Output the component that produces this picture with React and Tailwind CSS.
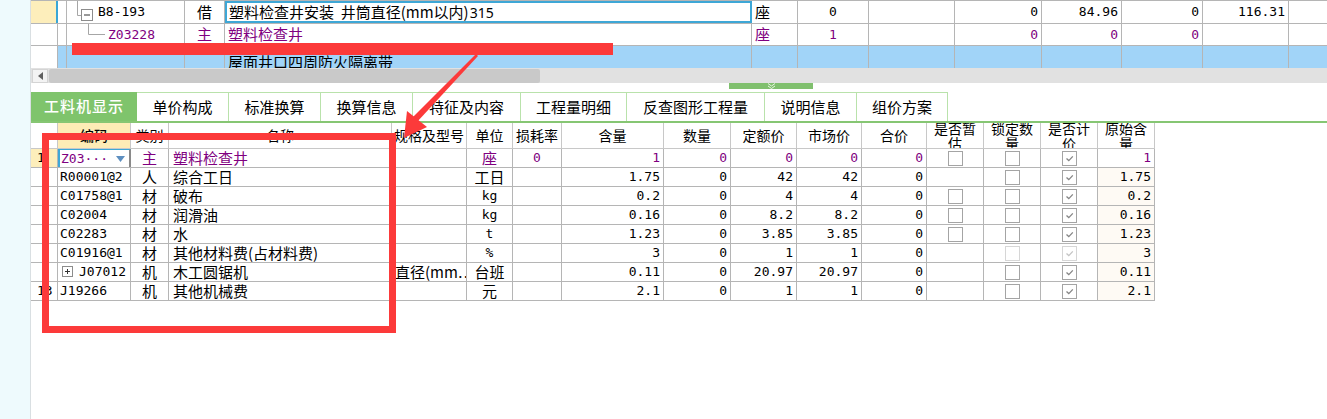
import React from "react";

const CJK = "font-['Noto_Sans_CJK_SC','Noto_Sans',sans-serif]";
const MONO = "font-['DejaVu_Sans_Mono','Noto_Sans_CJK_SC',monospace] text-[13px]";
const PURPLE = "text-[#800080]";
const LINE = "border-[#b5b5b5]";

const TopCell = ({ w, line = true, className = "", children }) => (
  <div
    className={`flex h-full shrink-0 items-center overflow-hidden whitespace-nowrap ${line ? `border-r ${LINE}` : ""} ${className}`}
    style={{ width: w }}
  >
    {children}
  </div>
);

const TreeBranch = ({ open }) =>
  open ? (
    <svg width="30" height="23" viewBox="0 0 30 23" className="shrink-0">
      <path d="M10.5 0 V14.5 H14" stroke="#a6a6a6" fill="none" />
      <rect x="14.5" y="8.5" width="11" height="11" fill="#fff" stroke="#8c8c8c" />
      <path d="M17 14 H23" stroke="#333" />
    </svg>
  ) : (
    <svg width="40" height="22" viewBox="0 0 40 22" className="shrink-0">
      <path d="M21.5 0 V10.5 H38" stroke="#a6a6a6" fill="none" />
    </svg>
  );

const BLUE_ROW = "bg-[#a1d4f8]";

function TopGrid() {
  return (
    <div className={`flex flex-col text-[15px] text-black ${CJK}`}>
      {/* row 1 */}
      <div className={`flex h-[24px] border-t border-b ${LINE}`}>
        <TopCell w={27} line={false} className="border-r-2 border-[#3aa6d6] bg-[#fdeebb]" />
        <TopCell w={9} />
        <TopCell w={118}>
          <TreeBranch open />
          <span className={`ml-[1px] ${MONO}`}>B8-193</span>
        </TopCell>
        <TopCell w={40} className="justify-center">借</TopCell>
        <TopCell w={527} line={false} className="border-2 border-[#3ea7d6] pl-[2px]">
          塑料检查井安装&nbsp;&nbsp;井筒直径(mm以内)
          <span className="ml-[1px] font-['Noto_Sans',sans-serif] text-[14px]">315</span>
        </TopCell>
        <TopCell w={46} className="pl-[3px]">座</TopCell>
        <TopCell w={71} className={`justify-center ${MONO}`}>0</TopCell>
        <TopCell w={86} />
        <TopCell w={87} className={`justify-end pr-[3px] ${MONO}`}>0</TopCell>
        <TopCell w={80} className={`justify-end pr-[3px] ${MONO}`}>84.96</TopCell>
        <TopCell w={81} className={`justify-end pr-[3px] ${MONO}`}>0</TopCell>
        <TopCell w={86} className={`justify-end pr-[3px] ${MONO}`}>116.31</TopCell>
        <div className="flex-1" />
      </div>
      {/* row 2 */}
      <div className={`flex h-[22px] border-b ${LINE} ${PURPLE}`}>
        <TopCell w={27} />
        <TopCell w={9} />
        <TopCell w={118}>
          <TreeBranch />
          <span className={`ml-[1px] ${MONO}`}>Z03228</span>
        </TopCell>
        <TopCell w={40} className="justify-center">主</TopCell>
        <TopCell w={527} className="pl-[3px]">塑料检查井</TopCell>
        <TopCell w={46} className="pl-[3px]">座</TopCell>
        <TopCell w={71} className={`justify-center ${MONO}`}>1</TopCell>
        <TopCell w={86} />
        <TopCell w={87} className={`justify-end pr-[3px] ${MONO}`}>0</TopCell>
        <TopCell w={80} className={`justify-end pr-[3px] ${MONO}`}>0</TopCell>
        <TopCell w={81} className={`justify-end pr-[3px] ${MONO}`}>0</TopCell>
        <TopCell w={86} />
        <div className="flex-1" />
      </div>
      {/* row 3 (selected, cut off by the scroll bar) */}
      <div className="flex h-[22px]">
        <TopCell w={27} className="bg-white" />
        <TopCell w={9} className={BLUE_ROW} />
        <TopCell w={118} className={BLUE_ROW} />
        <TopCell w={40} className={BLUE_ROW} />
        <div
          className={`h-full w-[527px] shrink-0 overflow-hidden border-r ${LINE} ${BLUE_ROW} pl-[3px] pt-[7px] leading-[17px]`}
        >
          屋面井口四周防火隔离带
          <br />
          <span className="pl-[48px]">带及砂浆找平层</span>
        </div>
        <TopCell w={46} className={BLUE_ROW} />
        <TopCell w={71} className={BLUE_ROW} />
        <TopCell w={86} className={BLUE_ROW} />
        <TopCell w={87} className={BLUE_ROW} />
        <TopCell w={80} className={BLUE_ROW} />
        <TopCell w={81} className={BLUE_ROW} />
        <TopCell w={86} className={BLUE_ROW} />
        <div className={`flex-1 ${BLUE_ROW}`} />
      </div>
    </div>
  );
}

function ScrollBar() {
  return (
    <div className="flex h-[15px] items-center bg-[#e1e1e1]">
      <div className="ml-[1px] flex h-[14px] w-[16px] items-center justify-center border border-[#d4d4d4] bg-[#f3f3f3]">
        <svg width="5" height="8" viewBox="0 0 5 8">
          <path d="M5 0 L0 4 L5 8 Z" fill="#606060" />
        </svg>
      </div>
      <div className="ml-[1px] h-[14px] w-[491px] rounded-[2px] bg-[#c9c9c9]" />
    </div>
  );
}

function Splitter() {
  return (
    <div className="flex h-[9px] items-start">
      <div className="ml-[698px] flex h-[6px] w-[84px] items-center justify-center bg-[#80c06e]">
        <svg width="9" height="6" viewBox="0 0 9 6">
          <path d="M1 0.5 L4.5 3 L8 0.5 M1 3 L4.5 5.5 L8 3" stroke="#e8f5e2" fill="none" />
        </svg>
      </div>
    </div>
  );
}

const tabs = [
  ["单价构成", 92],
  ["标准换算", 92],
  ["换算信息", 92],
  ["特征及内容", 108],
  ["工程量明细", 106],
  ["反查图形工程量", 138],
  ["说明信息", 92],
  ["组价方案", 91],
];

function Tabs() {
  return (
    <div className={`flex h-[31px] border-b-2 border-[#86c673] text-[15px] ${CJK}`}>
      <div className="flex h-full w-[106px] items-center justify-center bg-[#7fc46c] font-medium tracking-[1px] text-white">
        工料机显示
      </div>
      {tabs.map(([t, w]) => (
        <div
          key={t}
          className="flex h-full items-center justify-center border-t border-r border-[#b9e2ab] text-black"
          style={{ width: w }}
        >
          {t}
        </div>
      ))}
    </div>
  );
}

// bottom grid column widths
const cols = [27, 73, 38, 223, 75, 46, 49, 102, 67, 66, 65, 65, 57, 57, 57, 57];

const heads = [
  "",
  "编码",
  "类别",
  "名称",
  "规格及型号",
  "单位",
  "损耗率",
  "含量",
  "数量",
  "定额价",
  "市场价",
  "合价",
  ["是否暂", "估"],
  ["锁定数", "量"],
  ["是否计", "价"],
  ["原始含", "量"],
];

const data = [
  { h: "1", code: "Z03···", cat: "主", name: "塑料检查井", unit: "座", loss: "0", qty: "1", num: "0", quota: "0", market: "0", total: "0", est: "box", lock: "box", price: "check", orig: "1", sel: true },
  { code: "R00001@2", cat: "人", name: "综合工日", unit: "工日", qty: "1.75", num: "0", quota: "42", market: "42", total: "0", lock: "box", price: "check", orig: "1.75" },
  { code: "C01758@1", cat: "材", name: "破布", unit: "kg", qty: "0.2", num: "0", quota: "4", market: "4", total: "0", est: "box", lock: "box", price: "check", orig: "0.2" },
  { code: "C02004", cat: "材", name: "润滑油", unit: "kg", qty: "0.16", num: "0", quota: "8.2", market: "8.2", total: "0", est: "box", lock: "box", price: "check", orig: "0.16" },
  { code: "C02283", cat: "材", name: "水", unit: "t", qty: "1.23", num: "0", quota: "3.85", market: "3.85", total: "0", est: "box", lock: "box", price: "check", orig: "1.23" },
  { code: "C01916@1", cat: "材", name: "其他材料费(占材料费)", unit: "%", qty: "3", num: "0", quota: "1", market: "1", total: "0", lock: "dim", price: "dimcheck", orig: "3" },
  { code: "J07012", tree: true, cat: "机", name: "木工圆锯机", spec: "直径(mm…", unit: "台班", qty: "0.11", num: "0", quota: "20.97", market: "20.97", total: "0", lock: "box", price: "check", orig: "0.11" },
  { h: "13", code: "J19266", cat: "机", name: "其他机械费", unit: "元", qty: "2.1", num: "0", quota: "1", market: "1", total: "0", lock: "box", price: "check", orig: "2.1" },
];

const Check = ({ kind }) => {
  if (!kind) return null;
  const dim = kind === "dim" || kind === "dimcheck";
  const checked = kind === "check" || kind === "dimcheck";
  return (
    <span
      className={`flex h-[15px] w-[15px] items-center justify-center border bg-white ${
        dim ? "border-[#d6d6d6]" : "border-[#a4a4a4]"
      }`}
    >
      {checked && (
        <svg width="9" height="7" viewBox="0 0 9 7">
          <path d="M1.5 3.5 L3.8 5.6 L7.8 1.4" stroke={dim ? "#c4c4c4" : "#858585"} strokeWidth="1.3" fill="none" />
        </svg>
      )}
    </span>
  );
};

const Cell = ({ i, line = true, className = "", children }) => (
  <div
    className={`flex h-full shrink-0 items-center overflow-hidden whitespace-nowrap ${line ? `border-r ${LINE}` : ""} ${className}`}
    style={{ width: cols[i] }}
  >
    {children}
  </div>
);

function BottomGrid() {
  return (
    <div className={`w-[1124px] text-[15px] text-black ${CJK}`}>
      <div className="flex h-[26px] border-b border-[#c8c8c8]">
        {heads.map((h, i) => (
          <div
            key={i}
            className={`flex h-full shrink-0 flex-col items-center justify-center overflow-hidden whitespace-nowrap border-r border-[#c8c8c8] text-[14px] leading-[15px] ${
              i === 1 ? "bg-[#fdecb6] font-medium" : ""
            }`}
            style={{ width: cols[i] }}
          >
            {Array.isArray(h) ? (
              <>
                <span>{h[0]}</span>
                <span>{h[1]}</span>
              </>
            ) : (
              h
            )}
          </div>
        ))}
      </div>
      {data.map((r, k) => (
        <div key={k} className={`flex h-[19px] border-b ${LINE} ${r.sel ? PURPLE : ""}`}>
          <Cell i={0} className={`pl-[6px] ${MONO} ${r.sel ? "bg-[#fdeebb] text-black" : ""}`}>
            {r.h}
          </Cell>
          {r.sel ? (
            <Cell i={1} line={false} className={`border-t border-l-2 border-r-2 border-t-[#3ea7d6] border-l-[#3ea7d6] border-r-[#8a8a8a] pl-[1px] ${MONO}`}>
              <span className="flex-1">{r.code}</span>
              <svg width="9" height="6" viewBox="0 0 9 6" className="mr-[4px]">
                <path d="M0 0 H9 L4.5 6 Z" fill="#5d8fc0" />
              </svg>
            </Cell>
          ) : (
            <Cell i={1} className={`pl-[2px] ${MONO}`}>
              {r.tree && (
                <svg width="18" height="12" viewBox="0 0 18 12" className="mr-[1px] shrink-0">
                  <rect x="2.5" y="0.5" width="10" height="10" fill="#fff" stroke="#8c8c8c" />
                  <path d="M5 5.5 H10 M7.5 3 V8" stroke="#333" />
                </svg>
              )}
              <span>{r.code}</span>
            </Cell>
          )}
          <Cell i={2} className="justify-center">{r.cat}</Cell>
          <Cell i={3} className="pl-[4px]">{r.name}</Cell>
          <Cell i={4} className="pl-[3px]">{r.spec}</Cell>
          <Cell i={5} className={`justify-center ${/^[a-z%]+$/.test(r.unit) ? MONO : ""}`}>{r.unit}</Cell>
          <Cell i={6} className={`justify-center ${MONO}`}>{r.loss}</Cell>
          <Cell i={7} className={`justify-end pr-[3px] ${MONO}`}>{r.qty}</Cell>
          <Cell i={8} className={`justify-end pr-[3px] ${MONO}`}>{r.num}</Cell>
          <Cell i={9} className={`justify-end pr-[3px] ${MONO}`}>{r.quota}</Cell>
          <Cell i={10} className={`justify-end pr-[3px] ${MONO}`}>{r.market}</Cell>
          <Cell i={11} className={`justify-end pr-[3px] ${MONO}`}>{r.total}</Cell>
          <Cell i={12} className="justify-center"><Check kind={r.est} /></Cell>
          <Cell i={13} className="justify-center"><Check kind={r.lock} /></Cell>
          <Cell i={14} className="justify-center"><Check kind={r.price} /></Cell>
          <Cell i={15} className={`justify-end pr-[3px] ${MONO} ${r.sel ? "" : "bg-[#fefaf4]"}`}>{r.orig}</Cell>
        </div>
      ))}
    </div>
  );
}

export default function App() {
  return (
    <div className="relative flex h-[419px] w-[1327px] overflow-hidden bg-white">
      <div className="w-[31px] shrink-0 border-r border-[#d9dfe2] bg-[#eefafd]" />
      <div className="flex min-w-0 flex-1 flex-col">
        <TopGrid />
        <ScrollBar />
        <Splitter />
        <Tabs />
        <BottomGrid />
      </div>

      {/* red annotation marks drawn over the screenshot */}
      <div className="absolute left-[72px] top-[43px] h-[12px] w-[541px] bg-[#fc3a3a]" />
      <div className="absolute left-[42px] top-[133px] h-[200px] w-[354px] border-[7px] border-[#fc3a3a]" />
      <svg className="absolute left-0 top-0" width="1327" height="419" viewBox="0 0 1327 419">
        <path d="M476 54 L478 56 L417 122 L412 118 Z" fill="#fc3a3a" />
        <path d="M404 138 L407 111 L427 127 Z" fill="#fc3a3a" />
      </svg>
    </div>
  );
}
